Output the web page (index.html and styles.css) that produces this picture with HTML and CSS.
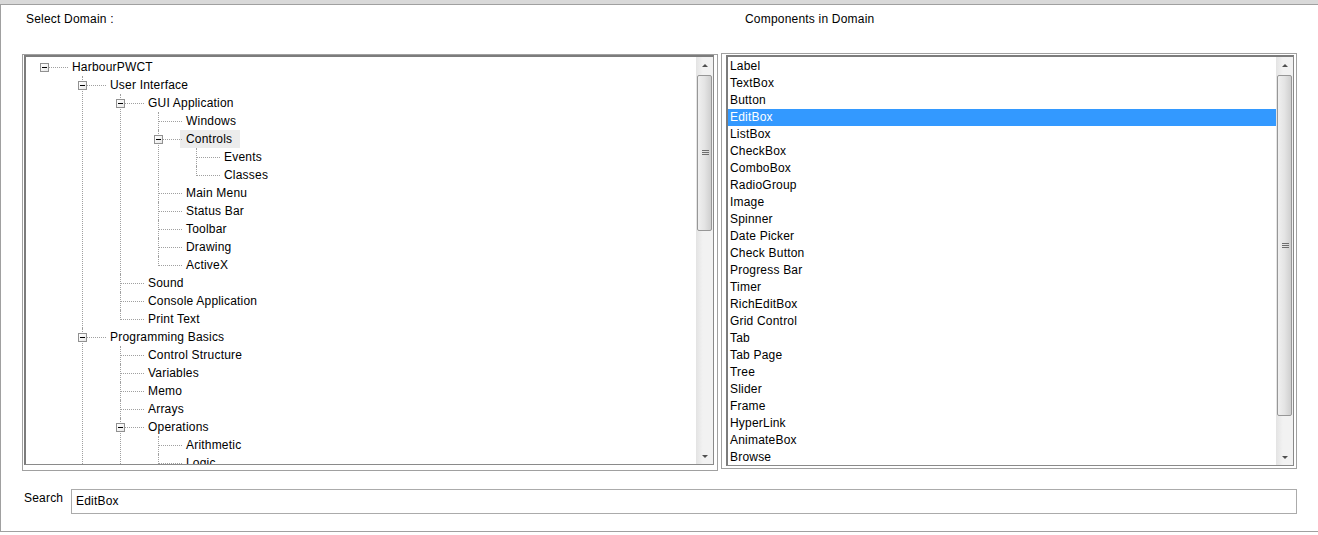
FILE: index.html
```html
<!DOCTYPE html>
<html>
<head>
<meta charset="utf-8">
<link rel="stylesheet" href="styles.css">
</head>
<body>
<div class="topbar"></div>
<div class="window">
  <div class="captions">
    <span class="cap cap-left">Select Domain :</span>
    <span class="cap cap-right">Components in Domain</span>
  </div>
  <div class="panels">
    <div class="group tree-group">
      <div class="box tree-box">
        <div class="view tree-view">
          <ul class="tree">
            <li><div class="node"><span class="toggle"></span><span class="label">HarbourPWCT</span></div>
              <ul>
                <li><div class="node"><span class="toggle"></span><span class="label">User Interface</span></div>
                  <ul>
                    <li><div class="node"><span class="toggle"></span><span class="label">GUI Application</span></div>
                      <ul>
                        <li><div class="node leaf"><span class="label">Windows</span></div></li>
                        <li><div class="node"><span class="toggle"></span><span class="label sel">Controls</span></div>
                          <ul>
                            <li><div class="node leaf"><span class="label">Events</span></div></li>
                            <li><div class="node leaf"><span class="label">Classes</span></div></li>
                          </ul>
                        </li>
                        <li><div class="node leaf"><span class="label">Main Menu</span></div></li>
                        <li><div class="node leaf"><span class="label">Status Bar</span></div></li>
                        <li><div class="node leaf"><span class="label">Toolbar</span></div></li>
                        <li><div class="node leaf"><span class="label">Drawing</span></div></li>
                        <li><div class="node leaf"><span class="label">ActiveX</span></div></li>
                      </ul>
                    </li>
                    <li><div class="node leaf"><span class="label">Sound</span></div></li>
                    <li><div class="node leaf"><span class="label">Console Application</span></div></li>
                    <li><div class="node leaf"><span class="label">Print Text</span></div></li>
                  </ul>
                </li>
                <li><div class="node"><span class="toggle"></span><span class="label">Programming Basics</span></div>
                  <ul>
                    <li><div class="node leaf"><span class="label">Control Structure</span></div></li>
                    <li><div class="node leaf"><span class="label">Variables</span></div></li>
                    <li><div class="node leaf"><span class="label">Memo</span></div></li>
                    <li><div class="node leaf"><span class="label">Arrays</span></div></li>
                    <li><div class="node"><span class="toggle"></span><span class="label">Operations</span></div>
                      <ul>
                        <li><div class="node leaf"><span class="label">Arithmetic</span></div></li>
                        <li><div class="node leaf"><span class="label">Logic</span></div></li>
                        <li><div class="node leaf"><span class="label">Comparison</span></div></li>
                      </ul>
                    </li>
                    <li><div class="node leaf"><span class="label">Functions</span></div></li>
                  </ul>
                </li>
                <li><div class="node leaf"><span class="label">Data Files</span></div></li>
              </ul>
            </li>
          </ul>
        </div>
        <div class="vscroll tree-scroll">
          <div class="sb-btn up"></div>
          <div class="sb-track"><div class="thumb"><span class="grip"></span></div></div>
          <div class="sb-btn down"></div>
        </div>
      </div>
    </div>
    <div class="group list-group">
      <div class="box list-box">
        <ul class="view list-view">
          <li>Label</li>
          <li>TextBox</li>
          <li>Button</li>
          <li class="sel">EditBox</li>
          <li>ListBox</li>
          <li>CheckBox</li>
          <li>ComboBox</li>
          <li>RadioGroup</li>
          <li>Image</li>
          <li>Spinner</li>
          <li>Date Picker</li>
          <li>Check Button</li>
          <li>Progress Bar</li>
          <li>Timer</li>
          <li>RichEditBox</li>
          <li>Grid Control</li>
          <li>Tab</li>
          <li>Tab Page</li>
          <li>Tree</li>
          <li>Slider</li>
          <li>Frame</li>
          <li>HyperLink</li>
          <li>AnimateBox</li>
          <li>Browse</li>
        </ul>
        <div class="vscroll list-scroll">
          <div class="sb-btn up"></div>
          <div class="sb-track"><div class="thumb"><span class="grip"></span></div></div>
          <div class="sb-btn down"></div>
        </div>
      </div>
    </div>
  </div>
  <div class="search-row">
    <span class="search-label">Search</span>
    <div class="search-input">EditBox</div>
  </div>
</div>
</body>
</html>
```

FILE: styles.css
```css
* { box-sizing: border-box; }
html, body {
  margin: 0;
  padding: 0;
  background: #ffffff;
  width: 1318px;
  height: 535px;
  overflow: hidden;
  font-family: "Liberation Sans", Arial, sans-serif;
  font-size: 12px;
  letter-spacing: 0.2px;
  color: #000;
}
.topbar {
  height: 5px;
  background: #d9d9d9;
  border-bottom: 1px solid #a0a0a0;
}
.window {
  height: 527px;
  padding-top: 7px;
  border-left: 1px solid #a0a0a0;
  border-bottom: 1px solid #a0a0a0;
}
.captions {
  display: flex;
  height: 14px;
  line-height: 14px;
  padding-left: 25px;
}
.cap-left { width: 719px; }
.panels {
  display: flex;
  align-items: flex-start;
  margin-top: 27px;
  padding-left: 21px;
  gap: 3px;
}
.group {
  border: 1px solid #a0a0a0;
}
.tree-group {
  margin-top: 1px;
  width: 696px;
  height: 417px;
  padding: 0 3px 5px 1px;
}
.list-group {
  width: 576px;
  height: 416px;
  padding: 1px 2px 2px 4px;
}
.box {
  display: flex;
  height: 100%;
  border: 1px solid #8a8a8a;
  border-left: 2px solid #7c7c7c;
  border-top: 2px solid #7c7c7c;
  background: #fff;
  overflow: hidden;
}
.view {
  flex: 1;
  overflow: hidden;
  margin: 0;
  padding: 1px 0 0 0;
}
/* tree */
.tree, .tree ul {
  list-style: none;
  margin: 0;
  padding: 0;
}
.tree ul { margin-left: 38px; }
.tree li { position: relative; }
.tree ul > li::after {
  content: "";
  position: absolute;
  left: 18px;
  top: 0;
  bottom: 0;
  border-left: 1px dotted #a0a0a0;
}
.tree ul > li:last-child::after {
  bottom: auto;
  height: 10px;
}
.node {
  position: relative;
  height: 18px;
  line-height: 18px;
  padding-left: 43px;
  white-space: nowrap;
}
.node::before {
  content: "";
  position: absolute;
  left: 19px;
  top: 9px;
  width: 23px;
  border-top: 1px dotted #a0a0a0;
}
.toggle {
  position: absolute;
  z-index: 2;
  left: 14px;
  top: 5px;
  width: 9px;
  height: 9px;
  border: 1px solid #919191;
  background: linear-gradient(to bottom right, #ffffff, #e8e8e8);
}
.toggle::after {
  content: "";
  position: absolute;
  left: 1px;
  top: 3px;
  width: 5px;
  height: 1px;
  background: #000;
}
.label {
  display: inline-block;
  padding: 0 3px;
  height: 18px;
}
.label.sel {
  background: #ececec;
  margin-left: -3px;
  padding: 0 8px 0 6px;
}
/* list */
.list-view {
  list-style: none;
}
.list-view li {
  height: 17px;
  line-height: 17px;
  padding-left: 2px;
  white-space: nowrap;
}
.list-view li.sel {
  background: #3399ff;
  color: #fff;
}
/* scrollbars */
.vscroll {
  width: 17px;
  display: flex;
  flex-direction: column;
  background: linear-gradient(to right, #e3e3e3, #f2f2f2 40%, #f2f2f2);
}
.sb-btn {
  height: 17px;
  position: relative;
}
.sb-btn::after {
  content: "";
  position: absolute;
  left: 6px;
  width: 0;
  height: 0;
  border-left: 3px solid transparent;
  border-right: 3px solid transparent;
}
.sb-btn.up::after { top: 7px; border-bottom: 3px solid #505050; }
.sb-btn.down::after { top: 8px; border-top: 3px solid #505050; }
.sb-track {
  flex: 1;
  padding: 1px 1px 0;
}
.thumb {
  position: relative;
  border: 1px solid #979797;
  border-radius: 2px;
  background: linear-gradient(to right, #f0f0f0, #e4e4e4 50%, #cfcfcf);
}
.tree-scroll .thumb { height: 156px; }
.list-scroll .thumb { height: 341px; }
.grip {
  position: absolute;
  left: 4px;
  top: 50%;
  margin-top: -3px;
  width: 7px;
  height: 5px;
  border-top: 1px solid #6e6e6e;
  border-bottom: 1px solid #6e6e6e;
}
.grip::after {
  content: "";
  position: absolute;
  left: 0;
  right: 0;
  top: 1px;
  border-top: 1px solid #6e6e6e;
}
/* search */
.search-row {
  display: flex;
  align-items: flex-start;
  margin-top: 18px;
  padding-left: 23px;
}
.search-label {
  width: 47px;
  line-height: 14px;
  margin-top: 2px;
}
.search-input {
  width: 1226px;
  height: 25px;
  border: 1px solid #ababab;
  padding-left: 4px;
  line-height: 23px;
}
```
